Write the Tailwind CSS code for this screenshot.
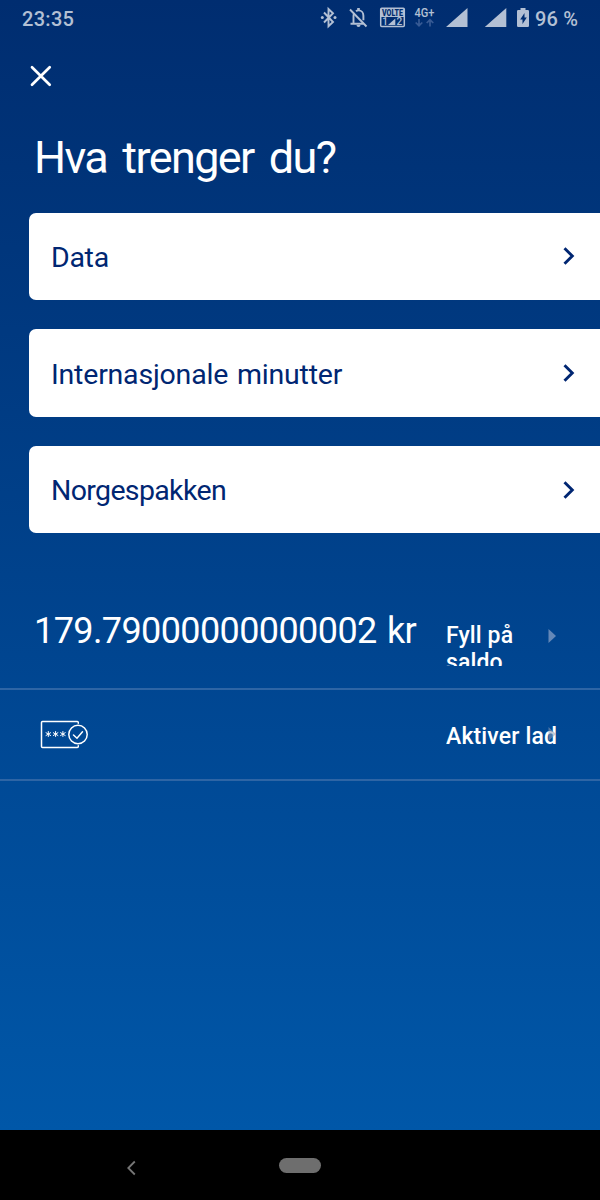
<!DOCTYPE html>
<html lang="no">
<head>
    <meta charset="UTF-8">
    <meta name="viewport" content="width=device-width, initial-scale=1.0">
    <title>Hva trenger du?</title>
    <script src="https://cdn.jsdelivr.net/npm/@tailwindcss/browser@4"></script>
</head>
<body class="w-[600px] h-[1200px] overflow-hidden bg-black font-['Roboto',sans-serif]">

    <div class="h-[1130px] flex flex-col bg-linear-to-b from-[#002d70] to-[#0057a8] text-white">

        <!-- Status bar -->
        <header class="h-9 shrink-0 flex items-center text-[#b3c0d4]">
            <span class="ml-[22px] w-[298px] pt-px text-[20px] font-medium leading-9 tracking-[0.3px]">23:35</span>
            <svg class="w-[280px] h-9 shrink-0" viewBox="320 0 280 36" fill="currentColor">
                <!-- Bluetooth -->
                <path d="M324 12.500l9 9.500-4.500 4.200V9l4.500 4.200-9 9.300" fill="none" stroke="currentColor" stroke-width="1.900"/>
                <circle cx="322.300" cy="17.500" r="1.500"/>
                <circle cx="335" cy="17.500" r="1.500"/>
                <!-- Muted bell -->
                <path d="M350.500 23.700h13M353.500 23.500v-7.500q0-1.800.9-3M356 11.300c.8-.7 1.500-.9 2.500-.9 3.200 0 4.900 2.600 4.900 5.300v4.500" fill="none" stroke="currentColor" stroke-width="1.900"/>
                <path d="M357.200 8h2.600v2.700h-2.600zM356.500 25h4a2 2 0 0 1-4 0z"/>
                <path d="M350 9.500l16.500 17" stroke="currentColor" stroke-width="1.900"/>
                <!-- VoLTE -->
                <rect x="380.700" y="8.200" width="23.600" height="18.200" rx="1" fill="none" stroke="currentColor" stroke-width="1.500"/>
                <path d="M381 8h23v9h-23z"/>
                <text x="382" y="15.800" font-size="8.500" font-weight="900" textLength="21" lengthAdjust="spacingAndGlyphs" fill="#002e70">VOLTE</text>
                <text x="382.200" y="25.300" font-size="10" font-weight="500">1</text>
                <text x="396.500" y="25.300" font-size="10" font-weight="500">2</text>
                <path d="M388 25h7.300v-6.500z"/>
                <!-- 4G+ -->
                <text x="414.500" y="17" font-size="12" font-weight="500" textLength="20" lengthAdjust="spacingAndGlyphs">4G+</text>
                <path d="M419 19v6.500m-3.300-3l3.300 3.200 3.300-3.200M430 26.500V20m-3.300 3l3.300-3.200 3.300 3.200" fill="none" stroke="#375a94" stroke-width="1.700"/>
                <!-- Signal -->
                <path d="M446 27h21.500V8zM484.800 27h21.500V8z"/>
                <!-- Battery -->
                <path fill-rule="evenodd" d="M520.500 8h5v2h2.300q1.200 0 1.200 1.200v14.600q0 1.200-1.200 1.200h-9.600q-1.200 0-1.200-1.200V11.200q0-1.200 1.200-1.200h2.300zM524.500 13l-4.300 6.500h2.300v4.500l4.300-6.500h-2.300z"/>
                <text x="535" y="25.500" font-size="20" font-weight="500" textLength="43" lengthAdjust="spacing">96 %</text>
            </svg>
        </header>

        <svg class="ml-7 mt-[27px] size-[26px] shrink-0" viewBox="0 0 26 26" fill="none" stroke="white" stroke-width="2.700" stroke-linecap="round">
            <path d="M4 4.300l17.700 17.400M21.700 4.300L4 21.700"/>
        </svg>

        <h1 class="ml-[34px] mt-[39px] h-[60px] leading-[60px] text-[45px] tracking-[-1.6px] [word-spacing:5.5px] whitespace-nowrap">Hva trenger du?</h1>

        <!-- Choices -->
        <nav class="mt-[24.500px] ml-[29px] flex flex-col gap-[29.200px] text-[28.500px] text-[#002672]">
            <a class="h-[87.500px] rounded-l-[7px] bg-white flex items-center justify-between pl-[22px] pr-[24.500px] whitespace-nowrap">
                <span class="pt-[4px] tracking-[-0.3px]">Data</span>
                <svg class="w-[14px] h-5" viewBox="0 0 14 20" fill="none" stroke="currentColor" stroke-width="2.900"><path d="M2.500 2.200l7.800 7.800-7.800 7.800"/></svg>
            </a>
            <a class="h-[87.500px] rounded-l-[7px] bg-white flex items-center justify-between pl-[22px] pr-[24.500px] whitespace-nowrap">
                <span class="pt-[4px] tracking-[-0.2px] [word-spacing:2px]">Internasjonale minutter</span>
                <svg class="w-[14px] h-5" viewBox="0 0 14 20" fill="none" stroke="currentColor" stroke-width="2.900"><path d="M2.500 2.200l7.800 7.800-7.800 7.800"/></svg>
            </a>
            <a class="h-[87.500px] rounded-l-[7px] bg-white flex items-center justify-between pl-[22px] pr-[24.500px] whitespace-nowrap">
                <span class="pt-[4px] tracking-[-0.65px]">Norgespakken</span>
                <svg class="w-[14px] h-5" viewBox="0 0 14 20" fill="none" stroke="currentColor" stroke-width="2.900"><path d="M2.500 2.200l7.800 7.800-7.800 7.800"/></svg>
            </a>
        </nav>

        <!-- Balance -->
        <section class="mt-[67px] h-[90px] shrink-0 flex items-start border-b-2 border-[#2e65a5]">
            <div class="w-[446px] pl-[34px] pt-[9px] text-[36px] leading-[44px] tracking-[-0.6px] [word-spacing:2px] whitespace-nowrap">179.79000000000002 kr</div>
            <div class="mt-[22px] h-[44px] w-[100px] overflow-hidden text-[23px] leading-[27px] font-medium tracking-[0.1px]">Fyll på<br>saldo</div>
            <svg class="mt-[29px] ml-[2px] w-2 h-[14px]" viewBox="0 0 8 14"><path d="M.5 0v14L8 7z" fill="#6488b8"/></svg>
        </section>

        <!-- Top-up activation -->
        <section class="h-[91px] shrink-0 flex items-center border-b-2 border-[#2e65a5]">
            <div class="w-[446px] pl-[40px]">
                <svg class="w-[49px] h-[30px]" viewBox="0 0 49 30" fill="none" stroke="white" stroke-width="1.500" stroke-linecap="round">
                    <path d="M38.300 3.300V2.500q0-1-1-1H2.500q-1 0-1 1v24q0 1 1 1h34.800q1 0 1-1v-.8"/>
                    <circle cx="38" cy="14.500" r="9.200"/>
                    <path d="M33.500 15l3.500 3.200 5.500-6.500"/>
                    <path stroke-width="1" d="M8.300 11.500v5M6 12.700l4.600 2.800M10.600 12.700L6 15.500M15.600 11.500v5M13.300 12.700l4.600 2.800M17.900 12.700l-4.600 2.800M22.900 11.500v5M20.600 12.700l4.600 2.800M25.200 12.700l-4.600 2.800"/>
                </svg>
            </div>
            <div class="relative mt-[4px] w-[112px] overflow-hidden text-[23px] leading-[28px] font-medium tracking-[0.15px] whitespace-nowrap">Aktiver lad
                <svg class="absolute left-[102px] top-[4px] w-2 h-[14px]" viewBox="0 0 8 14"><path d="M.5 0v14L8 7z" fill="#8f9fb8" fill-opacity=".55"/></svg>
            </div>
        </section>
    </div>

    <!-- Navigation bar -->
    <footer class="h-[70px] flex items-center">
        <svg class="ml-[125px] mt-[6px] w-3 h-4" viewBox="0 0 12 16" fill="none" stroke="#767676" stroke-width="1.800"><path d="M9.800 1.500L3.300 8l6.500 6.500"/></svg>
        <div class="ml-[142px] w-[42px] h-[15px] rounded-full bg-[#6e6e6e]"></div>
    </footer>

</body>
</html>
